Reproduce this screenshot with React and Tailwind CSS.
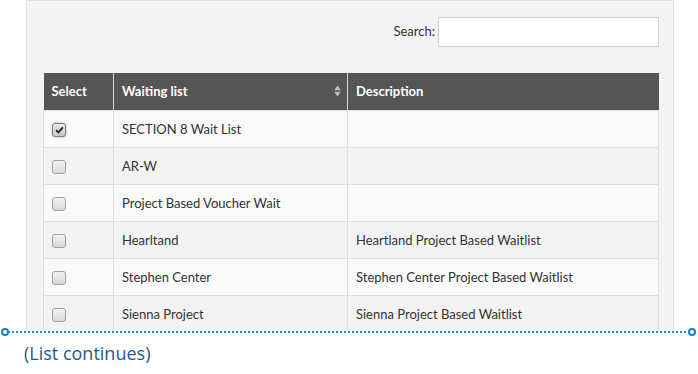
import React from "react";

const rows = [
  { name: "SECTION 8 Wait List", desc: "", checked: true },
  { name: "AR-W", desc: "" },
  { name: "Project Based Voucher Wait", desc: "" },
  { name: "Hearltand", desc: "Heartland Project Based Waitlist" },
  { name: "Stephen Center", desc: "Stephen Center Project Based Waitlist" },
  { name: "Sienna Project", desc: "Sienna Project Based Waitlist" },
];

function Box({ checked }) {
  return (
    <span
      className={
        checked
          ? "mt-[2px] flex h-[14px] w-[14px] items-center justify-center rounded-[3px] border border-[#7a7a7a] bg-gradient-to-b from-[#e8e8e8] to-[#c8c8c8] shadow-[0_0_2px_rgba(0,0,0,0.35)]"
          : "mt-[2px] flex h-[14px] w-[14px] items-center justify-center rounded-[3px] border border-[#a0a0a0] bg-gradient-to-b from-[#f2f2f2] to-[#d8d8d8]"
      }
    >
      {checked && (
        <svg width="9" height="8" viewBox="0 0 9 8">
          <path d="M1.2 4.2 L3.4 6.4 L7.8 1.4" fill="none" stroke="#222" strokeWidth="1.8" />
        </svg>
      )}
    </span>
  );
}

export default function App() {
  return (
    <div className="relative h-[374px] w-[698px] overflow-hidden bg-white" style={{ fontFamily: "Lato, 'Open Sans', sans-serif" }}>
      <div className="ml-[26px] h-[332px] w-[648px] overflow-hidden">
        <div className="border border-[#e3e3e3] bg-[#f4f4f4] pb-10 pl-[16px] pr-[14px] pt-[16px]">
          <div className="flex items-center justify-end gap-[3px]">
            <span className="text-[13px] text-[#333]">Search:</span>
            <div className="h-[30px] w-[221px] border border-[#cfcfcf] bg-white" />
          </div>
          <table className="mt-[26px] w-[616px] border-collapse text-[13px] text-[#333]">
            <thead>
              <tr className="h-[37px] bg-[#555555] text-left text-white">
                <th className="w-[70px] border-r border-[#d6d6d6] px-[8px] pt-[1px] font-bold">Select</th>
                <th className="relative w-[234px] border-r border-[#d6d6d6] px-[8px] pt-[1px] font-bold">
                  Waiting list
                  <span className="absolute right-[6px] top-1/2 flex -translate-y-1/2 flex-col gap-[1px]">
                    <svg width="7" height="5" viewBox="0 0 7 5"><path d="M3.5 0 L7 5 L0 5 Z" fill="#bdbdbd" /></svg>
                    <svg width="7" height="5" viewBox="0 0 7 5"><path d="M0 0 L7 0 L3.5 5 Z" fill="#bdbdbd" /></svg>
                  </span>
                </th>
                <th className="px-[8px] pt-[1px] font-bold">Description</th>
              </tr>
            </thead>
            <tbody>
              {rows.map((r, i) => (
                <tr key={i} className={i % 2 === 0 ? "h-[37px] bg-[#fafafa]" : "h-[37px] bg-[#f3f3f3]"}>
                  <td className="border border-[#dedede] px-[8px]">
                    <Box checked={r.checked} />
                  </td>
                  <td className="border border-[#dedede] px-[8px] pt-[2px]">{r.name}</td>
                  <td className="border border-[#dedede] px-[8px] pt-[2px]">{r.desc}</td>
                </tr>
              ))}
            </tbody>
          </table>
        </div>
      </div>
      <div className="absolute left-[4px] right-[4px] top-[331px] border-t-2 border-dotted border-[#1f8fd6]" />
      <span className="absolute left-[1px] top-[328px] h-[8px] w-[8px] rounded-full border-2 border-[#1a7fc4] bg-white" />
      <span className="absolute left-[688px] top-[328px] h-[8px] w-[8px] rounded-full border-2 border-[#1a7fc4] bg-white" />
      <div className="mt-[9px] pl-[24px] text-[18px] leading-[24px] text-[#1d5a8c]" style={{ fontFamily: "'Open Sans', sans-serif" }}>
        (List continues)
      </div>
    </div>
  );
}
